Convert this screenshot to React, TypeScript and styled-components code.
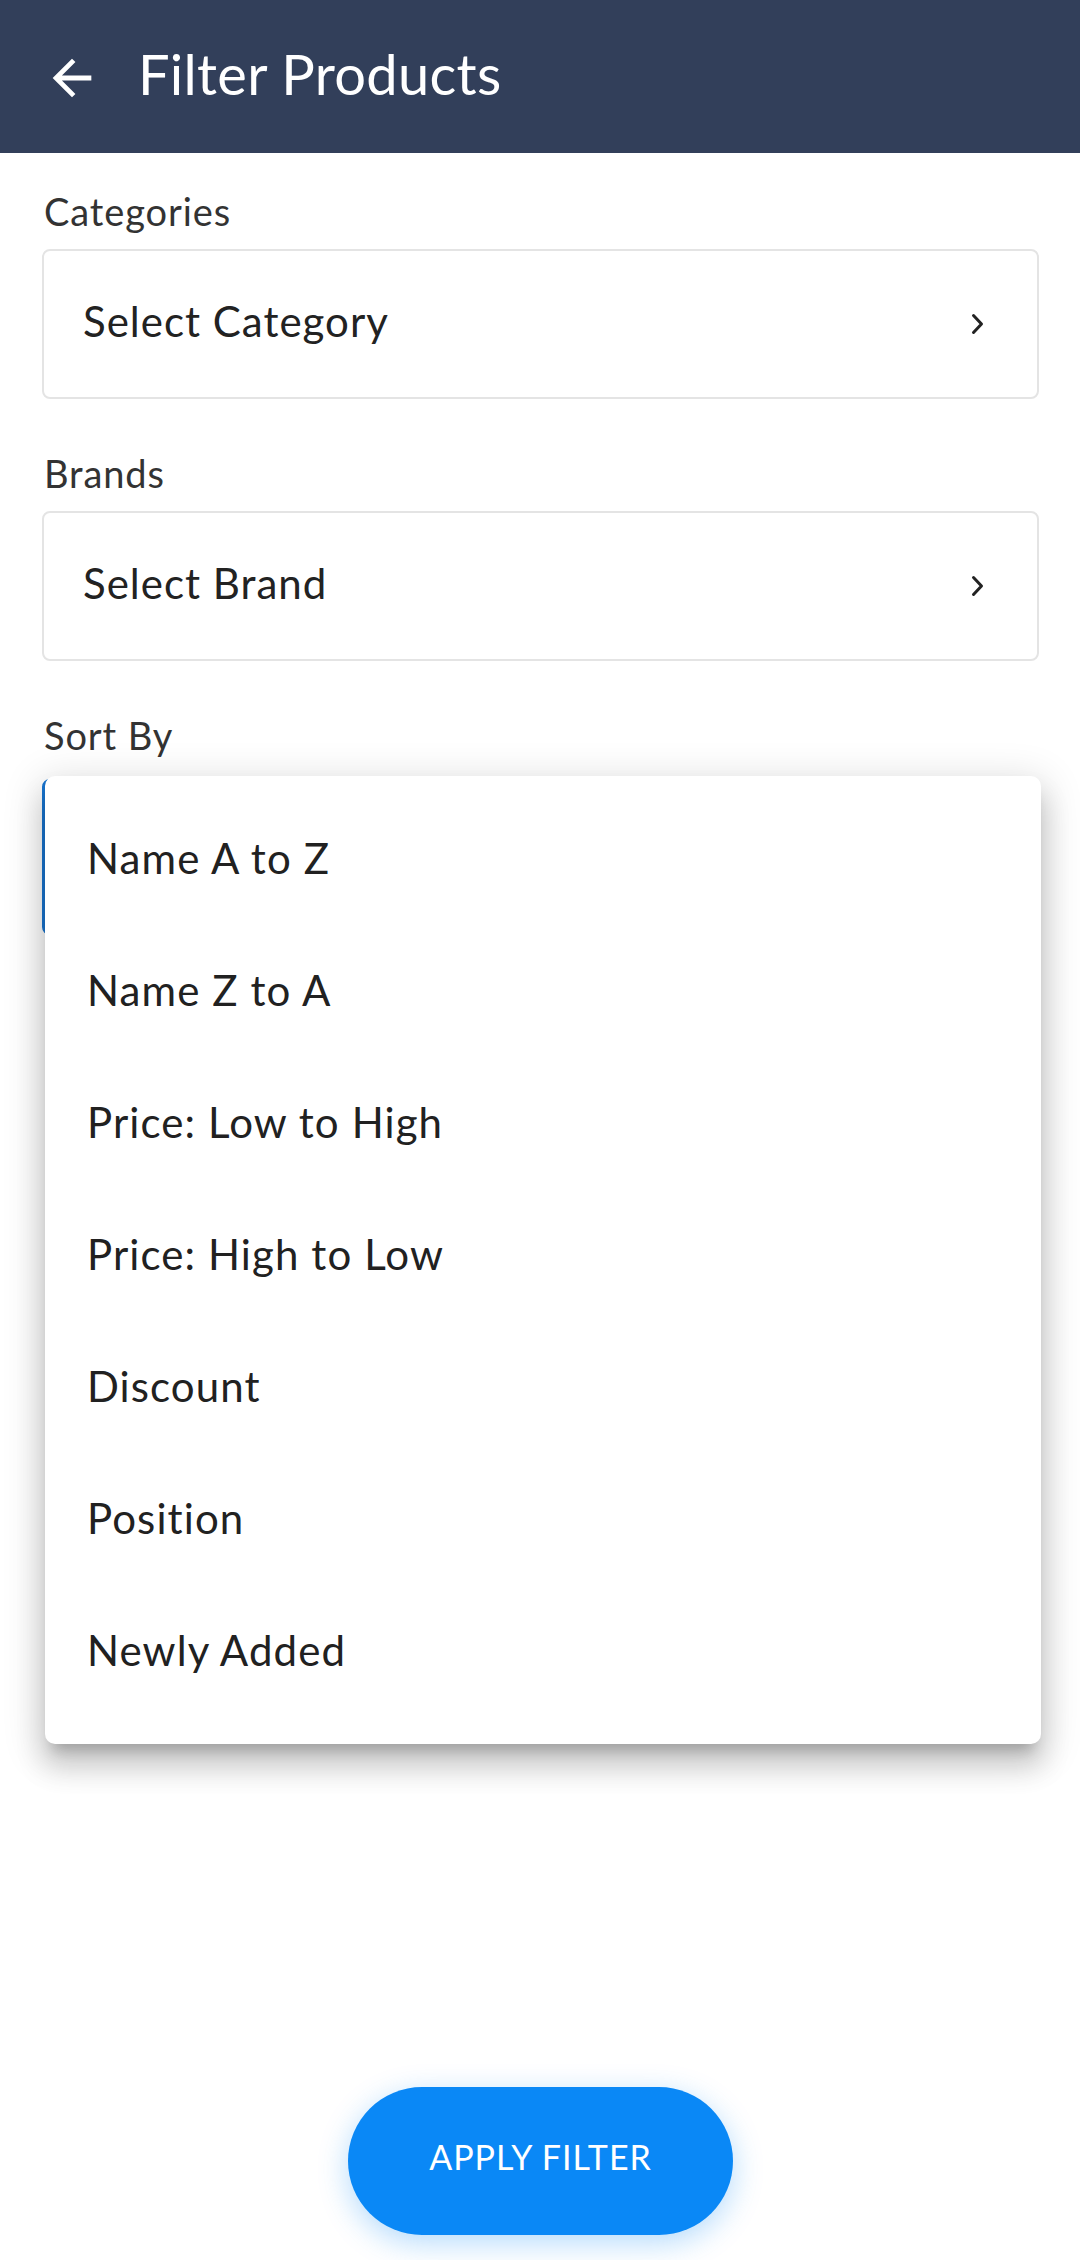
import React from 'react';
import styled, { createGlobalStyle } from 'styled-components';

const GlobalStyle = createGlobalStyle`
    html, body {
        margin: 0;
        padding: 0;
        background: #ffffff;
    }
    body {
        font-family: Lato, "Open Sans", "Noto Sans", sans-serif;
        -webkit-font-smoothing: antialiased;
    }
    * {
        box-sizing: border-box;
    }
`;

const sortOptions = [
    'Name A to Z',
    'Name Z to A',
    'Price: Low to High',
    'Price: High to Low',
    'Discount',
    'Position',
    'Newly Added',
];

const BackIcon = () => (
    <svg width="58" height="58" viewBox="0 0 24 24" fill="#ffffff">
        <path d="M20 11H7.83l5.59-5.59L12 4l-8 8 8 8 1.41-1.41L7.83 13H20v-2z" />
    </svg>
);

const Chevron = () => (
    <svg width="14" height="22" viewBox="0 0 14 22" fill="none">
        <path d="M2.5 2.5L10.5 11L2.5 19.5" stroke="#222222" strokeWidth="3" strokeLinecap="round" strokeLinejoin="round" />
    </svg>
);

interface FieldProps {
    label: string;
    placeholder: string;
}

const SelectField: React.FC<FieldProps> = ({ label, placeholder }) => (
    <Field>
        <Label>{label}</Label>
        <SelectBox>
            <SelectText>{placeholder}</SelectText>
            <Chevron />
        </SelectBox>
    </Field>
);

export default function App(): React.ReactElement {
    return (
        <>
            <GlobalStyle />
            <Page>
                <Header>
                    <BackButton>
                        <BackIcon />
                    </BackButton>
                    <Title>Filter Products</Title>
                </Header>
                <Content>
                    <SelectField label="Categories" placeholder="Select Category" />
                    <SelectField label="Brands" placeholder="Select Brand" />
                    <Field>
                        <Label>Sort By</Label>
                        <SortWrap>
                            <SortBox />
                            <Menu>
                                {sortOptions.map((option) => (
                                    <MenuItem key={option}>{option}</MenuItem>
                                ))}
                            </Menu>
                        </SortWrap>
                    </Field>
                </Content>
                <Footer>
                    <ApplyButton>APPLY FILTER</ApplyButton>
                </Footer>
            </Page>
        </>
    );
}

const Page = styled.div`
    width: 1080px;
    min-height: 2260px;
    display: flex;
    flex-direction: column;
    background: #ffffff;
`;

const Header = styled.header`
    height: 153px;
    background-color: #323f5a;
    display: flex;
    align-items: center;
    padding-left: 43px;
`;

const BackButton = styled.div`
    width: 58px;
    height: 58px;
    display: flex;
    margin-top: 2px;
`;

const Title = styled.h1`
    margin: -6px 0 0 37px;
    font-size: 56px;
    font-weight: 400;
    color: #ffffff;
    letter-spacing: 0.3px;
`;

const Content = styled.main`
    padding: 39px 41px 0 42px;
    display: flex;
    flex-direction: column;
    gap: 55px;
`;

const Field = styled.section`
    display: flex;
    flex-direction: column;
`;

const Label = styled.div`
    font-size: 38px;
    line-height: 38px;
    color: #333333;
    margin-bottom: 19px;
    padding-left: 2px;
    letter-spacing: 0.9px;
`;

const SelectBox = styled.div`
    height: 150px;
    border: 2px solid #e4e4e4;
    border-radius: 8px;
    display: flex;
    align-items: center;
    justify-content: space-between;
    padding: 0 52px 0 39px;
`;

const SelectText = styled.span`
    font-size: 42px;
    color: #222222;
    margin-top: -6px;
    letter-spacing: 1px;
`;

const SortWrap = styled.div`
    position: relative;
    margin-top: 6px;
`;

const SortBox = styled.div`
    height: 156px;
    border: 4px solid #1976d2;
    border-radius: 8px;
`;

const Menu = styled.ul`
    position: absolute;
    top: -3px;
    left: 3px;
    right: -2px;
    margin: 0;
    padding: 16px 0 28px;
    list-style: none;
    background: #ffffff;
    border-radius: 10px;
    box-shadow: 0 14px 14px -8px rgba(0, 0, 0, 0.2), 0 22px 28px 3px rgba(0, 0, 0, 0.14),
        0 8px 38px 7px rgba(0, 0, 0, 0.12);
    z-index: 2;
`;

const MenuItem = styled.li`
    height: 132px;
    display: flex;
    align-items: center;
    padding-left: 42px;
    font-size: 42px;
    color: #212121;
    letter-spacing: 1.1px;
`;

const Footer = styled.footer`
    margin-top: auto;
    display: flex;
    justify-content: center;
    padding-bottom: 25px;
`;

const ApplyButton = styled.button`
    width: 385px;
    height: 148px;
    border: none;
    border-radius: 74px;
    background-color: #0a88f6;
    color: #ffffff;
    font-family: Lato, "Open Sans", sans-serif;
    font-size: 34px;
    letter-spacing: 1px;
    padding: 0 0 10px;
    box-shadow: 0 8px 30px rgba(10, 136, 246, 0.3);
    margin-left: 1px;
`;
